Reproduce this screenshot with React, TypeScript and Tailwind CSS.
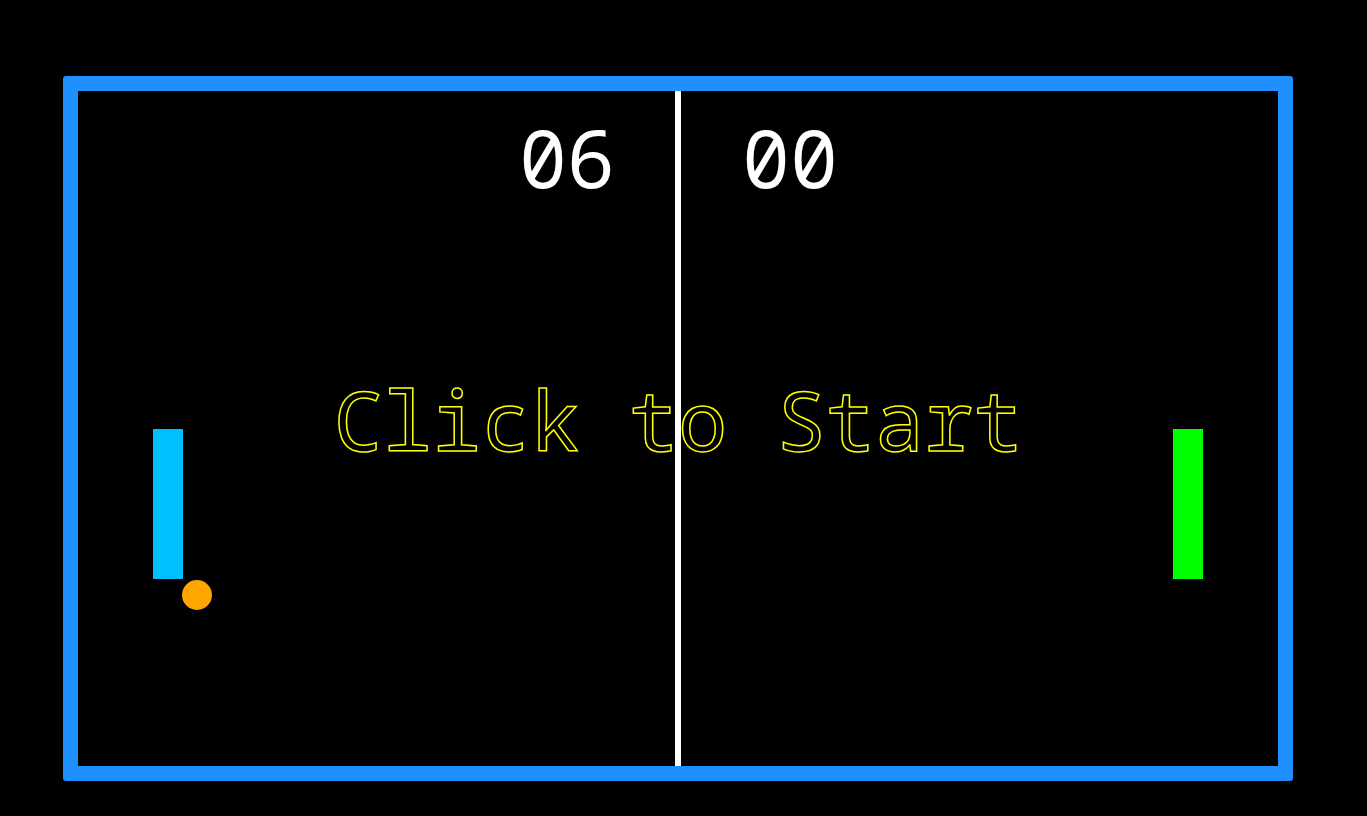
const MONO = "font-['Noto_Sans_Mono',monospace]";

function Paddle({ side, color }: { side: "left" | "right"; color: string }) {
  const pos = side === "left" ? "left-[75px]" : "left-[1095px]";
  return <div className={`absolute top-[338px] w-[30px] h-[150px] ${pos} ${color}`} />;
}

export default function App() {
  const left = "06";
  const right = "00";

  return (
    <div className="min-h-screen bg-black pt-[76px] pl-[63px]">
      <div className="relative w-[1230px] h-[705px] border-[15px] border-[#1e90ff] rounded-[3px] bg-black overflow-hidden">
        {/* net */}
        <div className="absolute z-10 left-[597px] top-0 bottom-0 w-[6px] bg-white" />

        {/* scores */}
        <div className={`flex pt-[26px] text-white text-[80px] leading-none ${MONO}`}>
          <div className="w-1/2 text-right pr-[63px]">{left}</div>
          <div className="w-1/2 text-left pl-[64px]">{right}</div>
        </div>

        <div
          className={`mt-[181px] text-center text-[82px] leading-none text-transparent [-webkit-text-stroke:1.5px_#ffff00] ${MONO}`}
        >
          Click to Start
        </div>

        <Paddle side="left" color="bg-[#00bfff]" />
        <Paddle side="right" color="bg-[#00ff00]" />
        <div className="absolute left-[104px] top-[489px] w-[30px] h-[30px] rounded-full bg-[#ffa500]" />
      </div>
    </div>
  );
}
